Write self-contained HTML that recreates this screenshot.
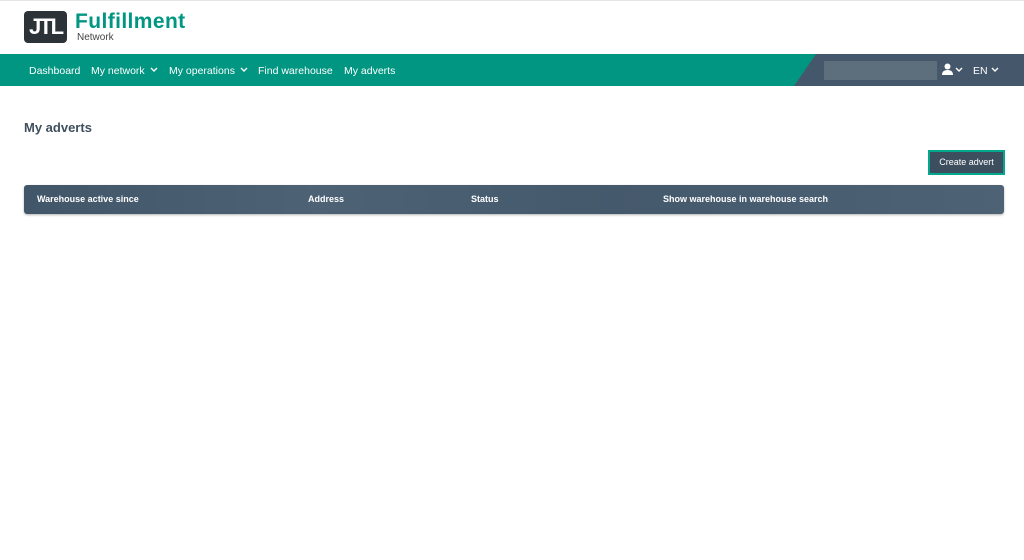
<!DOCTYPE html>
<html><head><style>
body{margin:0;width:1024px;height:560px;background:#fff;font-family:"Liberation Sans",sans-serif;position:relative;overflow:hidden}
.top{position:absolute;left:0;top:0;width:1024px;height:1px;background:#e5e5e5}
.logo{position:absolute;left:24px;top:11px;width:43px;height:32px;background:#2b3238;border-radius:4px;color:#fff;font-weight:bold;font-size:22px;line-height:32px;text-align:center;letter-spacing:-2px}
.brand{position:absolute;left:75px;top:11px;color:#009682;font-weight:bold;font-size:21px;line-height:22px;letter-spacing:0.4px}
.sub{position:absolute;left:77px;top:32px;color:#444;font-size:10px}
.bar{position:absolute;left:0;top:54px;width:1024px;height:32px;background:#009682}
.dark{position:absolute;left:794px;top:54px;width:230px;height:32px;background:#45576a;clip-path:polygon(22px 0,100% 0,100% 100%,0 100%)}
.nav{position:absolute;top:55px;line-height:32px;color:#fff;font-size:10.5px}
.inp{position:absolute;left:824px;top:61px;width:113px;height:19px;background:#5d6e7d}
h1{position:absolute;left:24px;top:120px;margin:0;font-size:13px;font-weight:bold;color:#3f4f5f}
.btn{position:absolute;left:928px;top:150px;width:73px;height:21px;background:#3d4e5e;border:2px solid #00a88d;color:#fff;font-size:9px;line-height:21px;text-align:center}
.th{position:absolute;left:24px;top:185px;width:980px;height:29px;border-radius:3px;background:linear-gradient(90deg,#42566a,#4d6275 30%,#45596c 60%,#4d6275);box-shadow:0 1px 2px rgba(0,0,0,.3)}
.th span{position:absolute;top:0;line-height:29px;color:#fff;font-size:9px;font-weight:bold}
.chev{position:absolute;top:67px}
</style></head><body>
<div class="top"></div>
<div class="logo">JTL</div>
<div class="brand">Fulfillment</div>
<div class="sub">Network</div>
<div class="bar"></div>
<div class="dark"></div>
<div class="nav" style="left:29px">Dashboard</div>
<div class="nav" style="left:91px">My network</div>
<svg class="chev" style="left:150px" width="8" height="6"><path d="M1 1l3 3 3-3" stroke="#fff" stroke-width="1.4" fill="none"/></svg>
<div class="nav" style="left:169px">My operations</div>
<svg class="chev" style="left:240px" width="8" height="6"><path d="M1 1l3 3 3-3" stroke="#fff" stroke-width="1.4" fill="none"/></svg>
<div class="nav" style="left:258px">Find warehouse</div>
<div class="nav" style="left:344px">My adverts</div>
<div class="inp"></div>
<svg style="position:absolute;left:942px;top:63px" width="22" height="14"><circle cx="5.5" cy="3.5" r="3" fill="#fff"/><path d="M0 12 Q0 7 5.5 7 Q11 7 11 12Z" fill="#fff"/><path d="M14 5l3 3 3-3" stroke="#fff" stroke-width="1.4" fill="none"/></svg>
<div class="nav" style="left:973px">EN</div>
<svg class="chev" style="left:991px" width="8" height="6"><path d="M1 1l3 3 3-3" stroke="#fff" stroke-width="1.4" fill="none"/></svg>
<h1>My adverts</h1>
<div class="btn">Create advert</div>
<div class="th"><span style="left:13px">Warehouse active since</span><span style="left:284px">Address</span><span style="left:447px">Status</span><span style="left:639px">Show warehouse in warehouse search</span></div>
</body></html>
